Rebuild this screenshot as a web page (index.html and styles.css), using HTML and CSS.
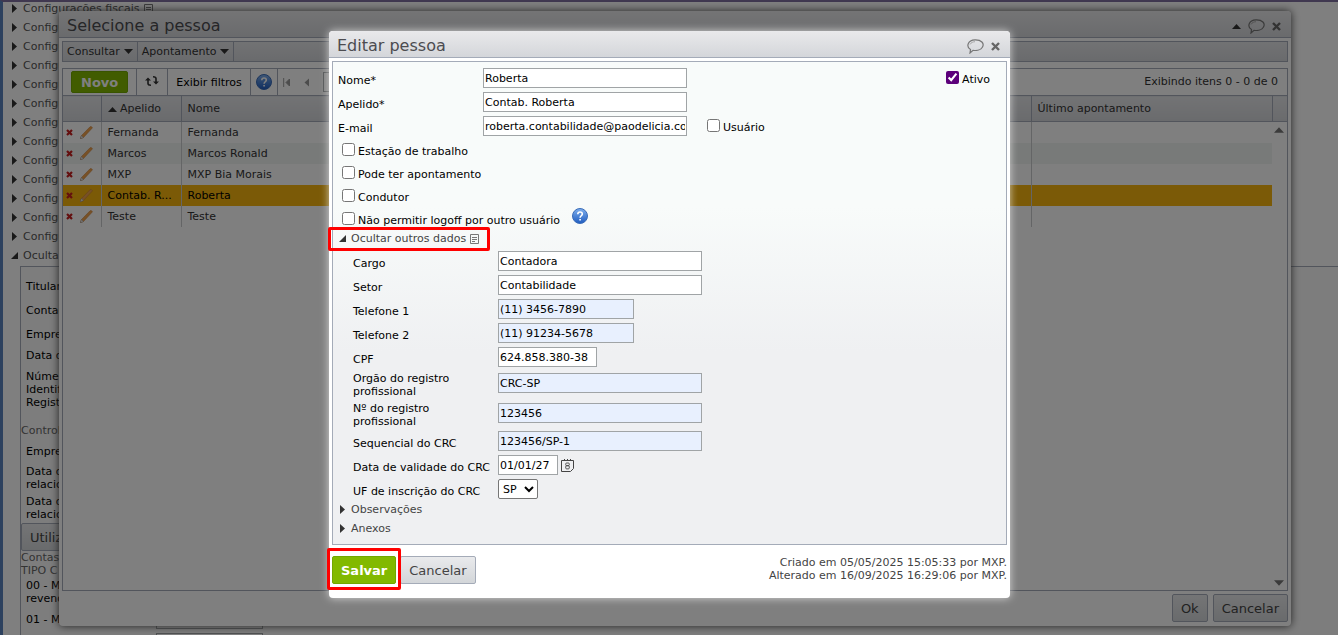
FILE: index.html
```
<!DOCTYPE html>
<html lang="pt-BR">
	<head>
		<title>Editar pessoa</title>
		<meta charset="UTF-8">
		<meta name="viewport" content="width=device-width, initial-scale=1">
		<link rel="stylesheet" href="styles.css">
	</head>
	<body>
		<!-- icons -->
		<svg class="sprite" aria-hidden="true">
			<defs>
				<linearGradient id="blue" x1="0" y1="0" x2="0" y2="1">
					<stop offset="0" stop-color="#7fb0ee"/>
					<stop offset="1" stop-color="#1f5cc0"/>
				</linearGradient>
			</defs>
			<symbol id="i-right" viewBox="0 0 7 9"><path d="M1 0L6 4.500L1 9z"/></symbol>
			<symbol id="i-open" viewBox="0 0 7 7"><path d="M7 0V7H0z"/></symbol>
			<symbol id="i-down" viewBox="0 0 9 5"><path d="M0 0H9L4.500 5z"/></symbol>
			<symbol id="i-up" viewBox="0 0 9 5"><path d="M0 5H9L4.500 0z"/></symbol>
			<symbol id="i-note" viewBox="0 0 9 10"><path d="M.5.5H8.500V9.500H.5zM2 3.500H7M2 5.500H7M2 7.500H5" fill="none" stroke="#777"/></symbol>
			<symbol id="i-chat" viewBox="0 0 17 15"><path d="M3.500 10.500C-1 8 .5 1 8 .8C14.500.6 17.500 4.500 15.500 8C14 10.800 9.500 11.800 6 11.300L3 14z" fill="none" stroke="#777" stroke-width="1.200"/><path d="M3 5.500C4 3.500 6 2.800 8 2.700" fill="none" stroke="#999" stroke-width=".8"/></symbol>
			<symbol id="i-close" viewBox="0 0 9 9"><path d="M1 1L8 8M8 1L1 8" stroke="#666" stroke-width="2.400"/></symbol>
			<symbol id="i-help" viewBox="0 0 16 16"><circle cx="8" cy="8" r="7.500" fill="url(#blue)" stroke="#3a6cb8"/><path d="M5.800 6.200C5.800 3.200 10.300 3.300 10.300 6C10.300 7.700 8.100 7.800 8.100 9.800M8.100 11V12.600" fill="none" stroke="#fff" stroke-width="1.600"/></symbol>
			<symbol id="i-refresh" viewBox="0 0 14 12"><path d="M3 4V8.500Q3 10.200 6 10.200M11 8V3.500Q11 1.800 8 1.800" fill="none" stroke="#333" stroke-width="1.600"/><path d="M0 5.500L3 2.500L6 5.500zM8 6.500L11 9.500L14 6.500z" fill="#333"/></symbol>
			<symbol id="i-del" viewBox="0 0 7 7"><path d="M1 1L6 6M6 1L1 6" stroke="#c81e1e" stroke-width="2.200"/></symbol>
			<symbol id="i-pencil" viewBox="0 0 13 13"><path d="M0 13L1.500 9.500L10 .8Q11.500 0 12.500 1.800L3.500 11.500z" fill="#f0a24c" stroke="#c47c3a" stroke-width=".5"/><path d="M0 13L1.500 9.500L3.500 11.500z" fill="#eee" stroke="#888" stroke-width=".4"/></symbol>
			<symbol id="i-first" viewBox="0 0 7 9"><path d="M.7 0V9M6.500 1L3 4.500L6.500 8z" fill="#999" stroke="#999"/></symbol>
			<symbol id="i-prev" viewBox="0 0 5 9"><path d="M5 .5V8.500L.5 4.500z" fill="#999"/></symbol>
			<symbol id="i-cal" viewBox="0 0 13 13"><path d="M.5 1.500H12.500V9.500L9.500 12.500H.5zM3.500 0V2M6.500 0V2M9.500 0V2" fill="none" stroke="#444"/><rect x="4.700" y="4" width="3.600" height="2.700" rx="1" fill="none" stroke="#444" stroke-width=".9"/><rect x="4.700" y="6.700" width="3.600" height="3.200" rx="1" fill="none" stroke="#444" stroke-width=".9"/></symbol>
		</svg>

		<!-- page behind the windows -->
		<main class="page">
			<ul class="sections">
				<li><svg class="arrow"><use href="#i-right"/></svg>Configurações fiscais<svg class="note"><use href="#i-note"/></svg></li>
				<li><svg class="arrow"><use href="#i-right"/></svg>Configurações</li>
				<li><svg class="arrow"><use href="#i-right"/></svg>Configurações</li>
				<li><svg class="arrow"><use href="#i-right"/></svg>Configurações</li>
				<li><svg class="arrow"><use href="#i-right"/></svg>Configurações</li>
				<li><svg class="arrow"><use href="#i-right"/></svg>Configurações</li>
				<li><svg class="arrow"><use href="#i-right"/></svg>Configurações</li>
				<li><svg class="arrow"><use href="#i-right"/></svg>Configurações</li>
				<li><svg class="arrow"><use href="#i-right"/></svg>Configurações</li>
				<li><svg class="arrow"><use href="#i-right"/></svg>Configurações</li>
				<li><svg class="arrow"><use href="#i-right"/></svg>Configurações</li>
				<li><svg class="arrow"><use href="#i-right"/></svg>Configurações</li>
				<li><svg class="arrow"><use href="#i-right"/></svg>Configurações</li>
				<li><svg class="arrow"><use href="#i-open"/></svg>Ocultar</li>
			</ul>
			<div class="panel">
				<p class="line">Titular</p>
				<p class="line">Contador</p>
				<p class="line">Empresa</p>
				<p class="line short">Data de</p>
				<p class="line triple">Número<br>Identificação<br>Registro</p>
				<h3>Controle</h3>
				<p class="line">Empresa</p>
				<p class="line double">Data do<br>relacionamento</p>
				<p class="line double">Data do<br>relacionamento</p>
				<button type="button" class="btn">Utilizar</button>
				<h3 class="type">Contas<br>TIPO C</h3>
				<p class="line double">00 - Mercadoria<br>revenda</p>
				<div class="line"><label for="t01">01 - Matéria</label><input id="t01" class="w-code"></div>
				<div class="line"><label for="t02"></label><input id="t02" class="w-code"></div>
			</div>
		</main>

		<!-- person list window -->
		<section class="window picker">
			<header class="titlebar">
				<h2>Selecione a pessoa</h2>
				<svg class="up"><use href="#i-up"/></svg>
				<svg class="chat"><use href="#i-chat"/></svg>
				<svg class="close"><use href="#i-close"/></svg>
			</header>
			<nav class="menubar">
				<button type="button">Consultar<svg class="down"><use href="#i-down"/></svg></button>
				<button type="button">Apontamento<svg class="down"><use href="#i-down"/></svg></button>
			</nav>
			<div class="list">
				<div class="toolbar">
					<div class="tool"><button type="button" class="btn green">Novo</button></div>
					<div class="tool"><button type="button" class="plain" aria-label="Atualizar"><svg class="refresh"><use href="#i-refresh"/></svg></button></div>
					<div class="tool"><button type="button" class="plain">Exibir filtros</button></div>
					<div class="tool narrow"><svg class="help"><use href="#i-help"/></svg></div>
					<div class="tool narrow pager">
						<svg class="first"><use href="#i-first"/></svg>
						<svg class="prev"><use href="#i-prev"/></svg>
						<input class="w-page" aria-label="Página">
					</div>
					<span class="count">Exibindo itens 0 - 0 de 0</span>
				</div>
				<table>
					<colgroup><col class="c-act"><col class="c-nick"><col><col class="c-last"><col class="c-bar"></colgroup>
					<thead>
						<tr><th></th><th><svg class="up"><use href="#i-up"/></svg> Apelido</th><th>Nome</th><th>Último apontamento</th><th></th></tr>
					</thead>
					<tbody>
						<tr><td><svg class="del"><use href="#i-del"/></svg><svg class="pencil"><use href="#i-pencil"/></svg></td><td>Fernanda</td><td>Fernanda</td><td></td><td></td></tr>
						<tr class="even"><td><svg class="del"><use href="#i-del"/></svg><svg class="pencil"><use href="#i-pencil"/></svg></td><td>Marcos</td><td>Marcos Ronald</td><td></td><td></td></tr>
						<tr><td><svg class="del"><use href="#i-del"/></svg><svg class="pencil"><use href="#i-pencil"/></svg></td><td>MXP</td><td>MXP Bia Morais</td><td></td><td></td></tr>
						<tr class="selected"><td><svg class="del"><use href="#i-del"/></svg><svg class="pencil"><use href="#i-pencil"/></svg></td><td>Contab. R...</td><td>Roberta</td><td></td><td></td></tr>
						<tr><td><svg class="del"><use href="#i-del"/></svg><svg class="pencil"><use href="#i-pencil"/></svg></td><td>Teste</td><td>Teste</td><td></td><td></td></tr>
					</tbody>
				</table>
				<div class="scroll"><svg><use href="#i-up"/></svg><svg><use href="#i-down"/></svg></div>
			</div>
			<footer class="actions">
				<button type="button" class="btn">Ok</button>
				<button type="button" class="btn">Cancelar</button>
			</footer>
		</section>

		<div class="overlay"></div>

		<!-- edit dialog -->
		<form class="window dialog">
			<header class="titlebar">
				<h2>Editar pessoa</h2>
				<svg class="chat"><use href="#i-chat"/></svg>
				<svg class="close"><use href="#i-close"/></svg>
			</header>
			<div class="form">
				<div class="field">
					<label for="nome">Nome*</label><input id="nome" value="Roberta">
					<div class="check end"><input type="checkbox" id="ativo" checked><label for="ativo">Ativo</label></div>
				</div>
				<div class="field">
					<label for="apelido">Apelido*</label><input id="apelido" value="Contab. Roberta">
				</div>
				<div class="field">
					<label for="email">E-mail</label><input id="email" value="roberta.contabilidade@paodelicia.com.br">
					<div class="check user"><input type="checkbox" id="usuario"><label for="usuario">Usuário</label></div>
				</div>
				<div class="check"><input type="checkbox" id="estacao"><label for="estacao">Estação de trabalho</label></div>
				<div class="check"><input type="checkbox" id="apont"><label for="apont">Pode ter apontamento</label></div>
				<div class="check"><input type="checkbox" id="condutor"><label for="condutor">Condutor</label></div>
				<div class="check"><input type="checkbox" id="logoff"><label for="logoff">Não permitir logoff por outro usuário</label><svg class="help"><use href="#i-help"/></svg></div>

				<div class="toggle"><span class="mark"><svg class="arrow"><use href="#i-open"/></svg>Ocultar outros dados<svg class="note"><use href="#i-note"/></svg></span></div>
				<div class="details">
					<div class="field"><label for="cargo">Cargo</label><input id="cargo" value="Contadora"></div>
					<div class="field"><label for="setor">Setor</label><input id="setor" value="Contabilidade"></div>
					<div class="field"><label for="tel1">Telefone 1</label><input id="tel1" class="filled w-phone" value="(11) 3456-7890"></div>
					<div class="field"><label for="tel2">Telefone 2</label><input id="tel2" class="filled w-phone" value="(11) 91234-5678"></div>
					<div class="field"><label for="cpf">CPF</label><input id="cpf" class="w-cpf" value="624.858.380-38"></div>
					<div class="field tall"><label for="orgao">Orgão do registro profissional</label><input id="orgao" class="filled" value="CRC-SP"></div>
					<div class="field tall"><label for="registro">Nº do registro profissional</label><input id="registro" class="filled" value="123456"></div>
					<div class="field"><label for="seq">Sequencial do CRC</label><input id="seq" class="filled" value="123456/SP-1"></div>
					<div class="field"><label for="validade">Data de validade do CRC</label><input id="validade" class="w-date" value="01/01/27"><svg class="cal"><use href="#i-cal"/></svg></div>
					<div class="field"><label for="uf">UF de inscrição do CRC</label><select id="uf"><option>SP</option></select></div>
				</div>
				<div class="toggle"><svg class="arrow"><use href="#i-right"/></svg>Observações</div>
				<div class="toggle"><svg class="arrow"><use href="#i-right"/></svg>Anexos</div>
			</div>
			<footer class="bottom">
				<span class="mark save"><button type="button" class="btn green">Salvar</button></span>
				<button type="button" class="btn">Cancelar</button>
				<p class="log">Criado em 05/05/2025 15:05:33 por MXP.<br>Alterado em 16/09/2025 16:29:06 por MXP.</p>
			</footer>
		</form>
	</body>
</html>
```
FILE: styles.css
```
*{
	box-sizing: border-box;
}
body{
	margin: 0;
	height: 100vh;
	overflow: hidden;
	background-color: #fff;
	color: #000;
}
body, input, select, button{
	font-family: "DejaVu Sans", Verdana, sans-serif;
	font-size: 11px;
	line-height: 13px;
}
h2, h3, p, ul{
	margin: 0;
	padding: 0;
	font-weight: normal;
}
svg{
	flex: none;
}
.sprite{
	position: absolute;
	width: 0;
	height: 0;
}

/* Icon sizes */
.arrow{ width: 7px; height: 9px; margin-right: 5px; fill: #333; }
.note{ width: 9px; height: 10px; margin-left: 4px; }
.up, .down{ width: 9px; height: 5px; fill: #333; }
.chat{ width: 17px; height: 15px; }
.close{ width: 9px; height: 9px; }
.help{ width: 16px; height: 16px; }
.refresh{ width: 14px; height: 12px; }
.first{ width: 7px; height: 9px; }
.prev{ width: 5px; height: 9px; }
.cal{ width: 13px; height: 13px; }
.del{ width: 7px; height: 7px; margin-right: 7px; }
.pencil{ width: 13px; height: 13px; }

/* Controls */
input, select{
	height: 20px;
	margin: 0;
	border: 1px solid #a0a4a6;
	background-color: #fff;
	color: #000;
}
input{
	width: 204px;
	padding: 0 1px;
}
input.filled{ background-color: #e8f0fe; }
input.w-phone{ width: 136px; }
input.w-cpf{ width: 99px; }
input.w-date{ width: 60px; }
input.w-page{ width: 30px; }
input.w-code{ width: 107px; }
select{
	width: 40px;
	padding: 0;
	border-color: #767676;
	border-radius: 2px;
}
input[type=checkbox]{
	width: 13px;
	height: 13px;
	accent-color: #5c007a;
}
.btn{
	height: 28px;
	padding: 0 8px;
	border: 1px solid #a4abb8;
	border-radius: 2px;
	background: linear-gradient(#e9eaec, #d3d6d9);
	color: #444;
	font-size: 13px;
}
.btn.green{
	border-color: #72a800;
	background: #82b900;
	color: #fff;
	font-weight: bold;
}

/* Page behind */
.page{
	height: 100vh;
	overflow: hidden;
	border-top: 2px solid #8070a0;
	border-left: 3px solid #5a82bd;
	padding-left: 8px;
	color: #000;
}
.sections{
	display: flex;
	flex-direction: column;
	gap: 6px;
	list-style: none;
	color: #555;
}
.sections li{
	display: flex;
	align-items: center;
}
.panel{
	margin: 4px 0 0 9px;
	padding-top: 7px;
	border: 1px solid #a4abb8;
	border-right: 0;
	background-color: #fbfbfb;
}
.panel h3{
	margin: 9px 0 2px;
	font-size: 11px;
	color: #666;
}
.panel h3.type{
	margin: 0;
}
.line{
	display: flex;
	align-items: center;
	height: 24px;
	padding-left: 5px;
}
.line.short{ height: 18px; }
.line.double{ height: 30px; }
.line.triple{ height: 51px; }
.line label{ width: 130px; }

/* Windows */
.window{
	position: absolute;
	display: flex;
	flex-direction: column;
	border-radius: 4px;
	background-color: #fff;
}
.titlebar{
	display: flex;
	align-items: center;
	gap: 7px;
	height: 27px;
	padding: 4px 10px 0 8px;
	border-bottom: 1px solid #a4abb8;
	border-radius: 4px 4px 0 0;
	background: linear-gradient(#e9e9eb, #d4d6da);
}
.titlebar h2{
	flex: 1;
	font-size: 16px;
	line-height: 20px;
	color: #4c4c50;
}
.picker{
	top: 11px;
	right: 47px;
	bottom: 9px;
	left: 59px;
	padding-bottom: 4px;
	box-shadow: 0 0 8px #444;
}
.menubar{
	display: flex;
	height: 21px;
	margin: 3px 3px 6px;
	border: 1px solid #a4abb8;
	background: linear-gradient(#e4e5e8, #d4d6da);
}
.menubar button{
	display: flex;
	align-items: center;
	gap: 4px;
	padding: 0 4px;
	border: 0;
	border-right: 1px solid #a4abb8;
	background: none;
	color: #333;
}
.list{
	position: relative;
	flex: 1;
	margin: 0 3px;
	border: 1px solid #a4abb8;
}
.toolbar{
	display: flex;
	height: 26px;
}
.tool{
	display: flex;
	align-items: center;
	padding: 0 8px;
	border-right: 1px solid #a4abb8;
}
.tool.narrow{
	padding: 0 5px;
}
.tool .btn{
	height: 22px;
	padding: 0 9px;
}
.tool .plain{
	padding: 0;
	border: 0;
	background: none;
	color: #000;
}
.pager{
	gap: 14px;
	border: 0;
}
.count{
	margin-left: auto;
	padding: 6px 9px;
	color: #333;
}
table{
	width: 100%;
	table-layout: fixed;
	border-collapse: collapse;
}
.c-act{ width: 38px; }
.c-nick{ width: 80px; }
.c-last{ width: 241px; }
.c-bar{ width: 15px; }
th, td{
	padding: 0 6px;
	text-align: left;
	font-weight: normal;
	white-space: nowrap;
	color: #333;
}
th{
	height: 26px;
	border: 1px solid #a4abb8;
	background: linear-gradient(#e6e7ea, #d4d6da);
}
th:first-child{ border-left: 0; }
th:last-child{ border-right: 0; }
td{
	height: 21px;
	border-right: 1px solid #c8cacd;
}
td:nth-child(n+4){ border-right: 0; }
td:first-child{
	padding: 0 3px;
}
td svg, th svg{
	vertical-align: middle;
}
.even td{ background-color: #f0f4f3; }
.selected td{
	background-color: #f6b40e;
	color: #000;
}
tr td:last-child{ background-color: #fff; }
.scroll{
	position: absolute;
	top: 57px;
	right: 3px;
	bottom: 3px;
	display: flex;
	flex-direction: column;
	justify-content: space-between;
}
.scroll svg{
	width: 10px;
	height: 8px;
	fill: #777;
}
.actions{
	display: flex;
	justify-content: flex-end;
	gap: 5px;
	padding: 3px 3px 0;
}

.overlay{
	position: absolute;
	top: 0;
	right: 0;
	bottom: 0;
	left: 0;
	background-color: rgba(0, 0, 0, 0.5);
}

/* Dialog */
.dialog{
	top: 31px;
	left: 50%;
	width: 681px;
	margin-left: -340px;
	box-shadow: 0 0 8px rgba(255, 255, 255, 0.7);
}
.form{
	margin: 3px 3px 0;
	padding: 6px 5px 3px;
	border: 1px solid #a4abb8;
	background: linear-gradient(#f8fbfa, #f8fbfa 30%, #eff0f2 60%);
}
.field{
	display: flex;
	align-items: flex-start;
	height: 24px;
}
.field > label{
	width: 145px;
	padding-top: 6px;
}
.field.tall{
	height: 30px;
}
.field.tall > label{
	padding: 1px 30px 0 0;
}
.field.tall > input{
	margin-top: 2px;
}
.field .cal{
	margin: 4px 3px;
}
.check{
	display: flex;
	height: 23px;
	padding: 3px 4px 0;
}
.check label{
	padding: 2px 0 0 3px;
}
.check .help{
	margin: -4px 0 0 12px;
}
.check.end{
	margin-left: auto;
	padding-right: 11px;
}
.check.user{
	margin-left: 16px;
}
.toggle{
	display: flex;
	align-items: center;
	height: 13px;
	margin-bottom: 6px;
	padding-left: 1px;
	color: #444;
}
.details{
	padding-left: 15px;
}
.bottom{
	display: flex;
	align-items: flex-start;
	gap: 4px;
	padding: 11px 3px 14px;
}
.log{
	margin-left: auto;
	text-align: right;
	color: #444;
}

/* Red frames */
.mark{
	position: relative;
	display: flex;
	align-items: center;
}
.mark::after{
	content: "";
	position: absolute;
	top: -5px;
	right: -11px;
	bottom: -6px;
	left: -11px;
	border: 3px solid #f00;
	border-radius: 2px;
	pointer-events: none;
}
.mark.save::after{
	top: -8px;
	right: -5px;
	left: -5px;
	z-index: 1;
}
```
